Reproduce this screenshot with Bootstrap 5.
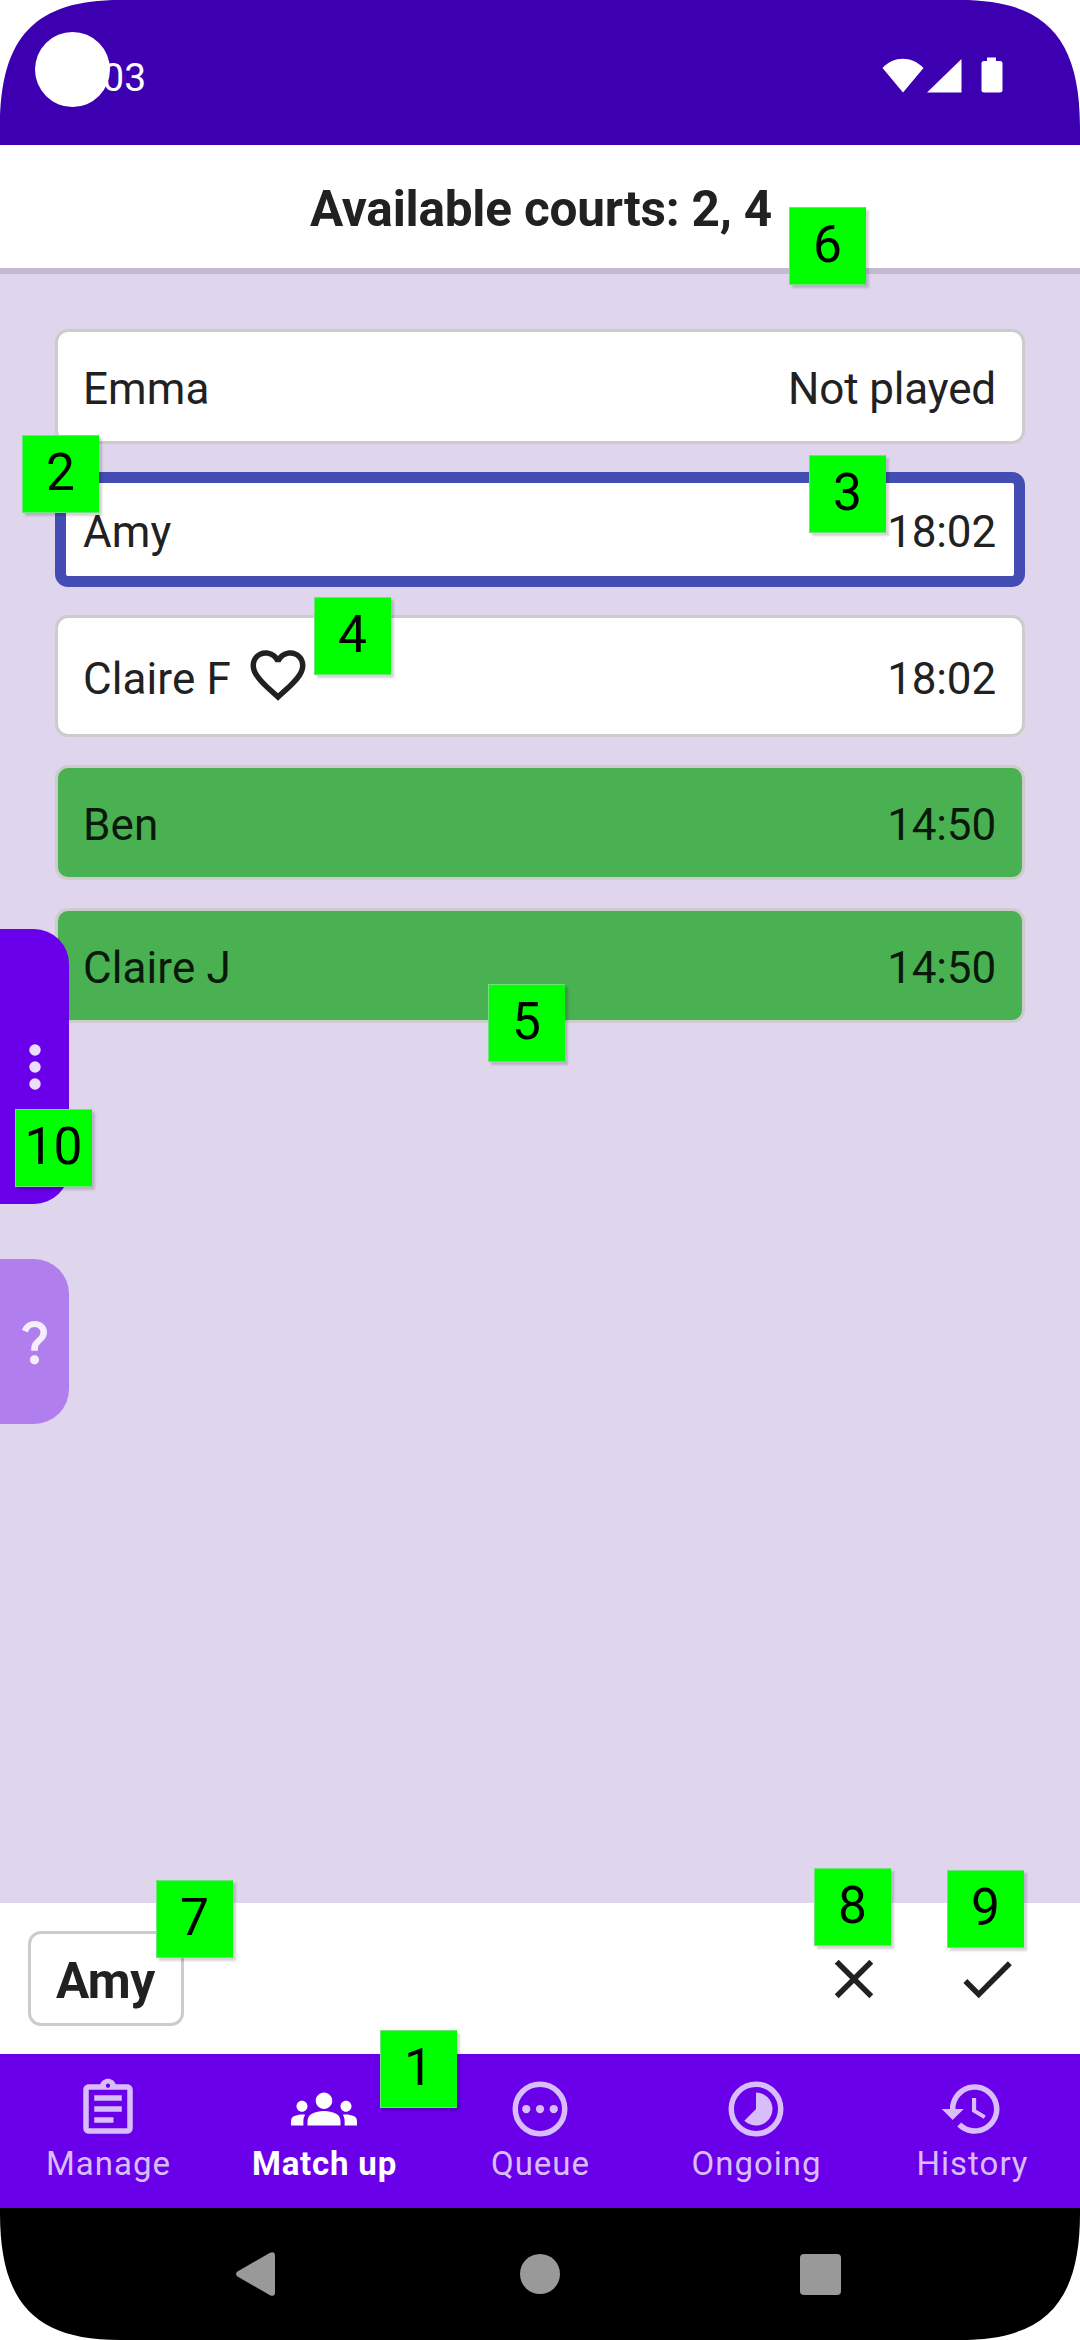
<!DOCTYPE html>
<html lang="en">
<head>
<meta charset="utf-8">
<meta name="viewport" content="width=device-width, initial-scale=1">
<title>Match up</title>
<link rel="stylesheet" href="https://cdn.jsdelivr.net/npm/bootstrap@5.3.0/dist/css/bootstrap.min.css">
<style>
  body { font-family: Roboto, sans-serif; color: #212121; background: #fff; }
  svg { display: block; fill: currentColor; flex: none; }
  .screen { width: 1080px; height: 2340px; background: #dfd6ee; }
  .status-bar { height: 145px; background: #3d00b0; color: #fff; padding: 5px 77px 0 49px; }
  .clock { font-size: 39px; line-height: 1; padding-top: 6px; }
  .camera { left: 35px; top: 32px; width: 75px; height: 75px; }
  .title-bar { height: 129px; background: #fff; border-bottom: 6px solid #c4bbd3; font-size: 49.5px; letter-spacing: -.2px; padding: 6px 0 0 2px; }
  .players { padding: 55px 55px 0; gap: 28px; }
  .player { min-height: 115px; border: 3px solid #ccc; border-radius: 13px; background: #fff; padding: 5px 26px 0 25px; font-size: 44px; line-height: 59px; letter-spacing: -.15px; }
  .player > span:first-child { letter-spacing: .1px; }
  .player.fav { min-height: 122px; padding-top: 6px; }
  .player.fav svg { margin: -8px 0 0 14px; }
  .player.selected { border: 11px solid #434db3; padding: 5px 18px 0 17px; }
  .player.resting { background: #49b152; border-color: #ccc; color: #091a0b; }
  .selection { height: 151px; background: #fff; padding: 0 60px 0 28px; box-shadow: inset 0 -5px 5px -4px #0000000c; }
  .chip { width: 156px; height: 95px; border: 3px solid #ccc; border-radius: 13px; padding: 5px 0 0 25px; font-size: 49.5px; letter-spacing: -.6px; }
  .actions { gap: 67px; }
  .tab-bar { height: 154px; background: #6a00ea; padding-top: 22px; }
  .tab-item { color: #d9bdfa; font-size: 33px; line-height: 39px; letter-spacing: 1px; gap: 2px; }
  .tab-item span { padding-left: 1px; }
  .tab-item.current { color: #fff; letter-spacing: .8px; }
  .system-bar { height: 132px; background: #000; color: #999; padding: 0 239px 0 236px; }
  .home-key { margin-left: 5px; }
  .drawer { left: 0; width: 69px; border-radius: 0 35px 35px 0; }
  .drawer-menu { top: 929px; height: 275px; background: #6a00ea; color: #ecdcfd; }
  .drawer-help { top: 1259px; height: 165px; background: #b07eed; color: #f5edfd; }
  .tag { width: 77px; height: 78px; background: #0f0; color: #000; font-size: 51.5px; line-height: 74px; text-align: center; box-shadow: 3px 3px 2px #0000002b; border: 1px solid #6fe37a; border-right-color: #0f0; }
  .t1 { left: 380px; top: 2030px; } .t2 { left: 22px; top: 435px; }
  .t3 { left: 809px; top: 455px; } .t4 { left: 314px; top: 597px; }
  .t5 { left: 488px; top: 984px; } .t6 { left: 789px; top: 207px; }
  .t7 { left: 156px; top: 1880px; } .t8 { left: 814px; top: 1868px; }
  .t9 { left: 947px; top: 1870px; } .t10 { left: 15px; top: 1109px; }
</style>
<script src="https://cdn.jsdelivr.net/npm/bootstrap@5.3.0/dist/js/bootstrap.bundle.min.js"></script>
</head>
<body>
<div class="screen position-relative overflow-hidden d-flex flex-column">
  <header class="status-bar d-flex align-items-center justify-content-between">
    <span class="clock">18:03</span>
    <svg width="121" height="36" viewBox="0 0 121 36"><path d="M.5 11C12-1.300 29.500-1.300 41.500 11L21 35.500zM45 35.500L79.500 2V35.500zM105 .500h9v3.500h4q2.500 0 2.500 2.500v27q0 2-2.500 2h-16q-2.500 0-2.500-2v-27q0-2.500 2.500-2.500h3z"/></svg>
  </header>
  <div class="title-bar d-flex align-items-center justify-content-center fw-bold">Available courts: 2, 4</div>

  <main class="players d-flex flex-column flex-grow-1">
    <div class="player d-flex align-items-center justify-content-between"><span>Emma</span><span>Not played</span></div>
    <div class="player selected d-flex align-items-center justify-content-between"><span>Amy</span><span>18:02</span></div>
    <div class="player fav d-flex align-items-center justify-content-between">
      <span class="d-flex align-items-center">Claire F
        <svg width="66" height="66" viewBox="0 0 24 24"><path d="M16.500 3c-1.740 0-3.410.81-4.500 2.090C10.910 3.810 9.240 3 7.500 3 4.420 3 2 5.420 2 8.500c0 3.780 3.400 6.860 8.550 11.540L12 21.350l1.450-1.320C18.600 15.360 22 12.280 22 8.500 22 5.420 19.580 3 16.500 3zm-4.400 15.550l-.1.100-.1-.1C7.140 14.240 4 11.390 4 8.500 4 6.500 5.500 5 7.500 5c1.540 0 3.040.99 3.570 2.360h1.870C13.460 5.990 14.960 5 16.500 5c2 0 3.500 1.500 3.500 3.500 0 2.890-3.140 5.740-7.900 10.050z"/></svg>
      </span><span>18:02</span>
    </div>
    <div class="player resting d-flex align-items-center justify-content-between"><span>Ben</span><span>14:50</span></div>
    <div class="player resting d-flex align-items-center justify-content-between"><span>Claire J</span><span>14:50</span></div>
  </main>

  <section class="selection d-flex align-items-center justify-content-between">
    <span class="chip d-flex align-items-center fw-bold">Amy</span>
    <span class="actions d-flex">
      <svg width="66" height="66" viewBox="0 0 24 24"><path d="M19 6.410L17.590 5 12 10.590 6.410 5 5 6.410 10.590 12 5 17.590 6.410 19 12 13.410 17.590 19 19 17.590 13.410 12z"/></svg>
      <svg width="66" height="66" viewBox="0 0 24 24"><path d="M9 16.170L4.830 12l-1.420 1.410L9 19 21 7l-1.410-1.410z"/></svg>
    </span>
  </section>

  <nav class="tab-bar row g-0 align-items-start">
    <a class="tab-item col d-flex flex-column align-items-center text-decoration-none"><svg width="66" height="66" viewBox="0 0 24 24"><path fill-rule="evenodd" d="M7 15h7v2H7zm0-4h10v2H7zm0-4h10v2H7zM19 3h-4.180C14.400 1.840 13.300 1 12 1s-2.400.84-2.820 2H5c-1.100 0-2 .9-2 2v14c0 1.100.9 2 2 2h14c1.100 0 2-.9 2-2V5c0-1.100-.9-2-2-2zm-7-.25c.41 0 .75.34.75.75s-.34.750-.75.750-.75-.34-.75-.75.34-.75.75-.75zM19 19H5V5h14z"/></svg><span>Manage</span></a>
    <a class="tab-item current fw-bold col d-flex flex-column align-items-center text-decoration-none"><svg width="66" height="66" viewBox="0 0 24 24"><path d="M12 12.750c1.630 0 3.070.39 4.240.9 1.080.48 1.760 1.560 1.760 2.730V18H6v-1.610c0-1.180.68-2.260 1.760-2.730 1.170-.52 2.610-.91 4.240-.91zM4 13c1.100 0 2-.9 2-2s-.9-2-2-2-2 .9-2 2 .9 2 2 2zm1.130 1.100C4.760 14.040 4.390 14 4 14c-.99 0-1.930.21-2.780.58C.48 14.900 0 15.620 0 16.430V18h4.500v-1.610c0-.83.23-1.610.63-2.290zM20 13c1.100 0 2-.9 2-2s-.9-2-2-2-2 .9-2 2 .9 2 2 2zm4 3.430c0-.81-.48-1.530-1.220-1.850C21.930 14.210 20.990 14 20 14c-.39 0-.76.04-1.130.1.4.68.63 1.460.63 2.290V18H24v-1.570zM12 6c1.660 0 3 1.340 3 3s-1.340 3-3 3-3-1.340-3-3 1.340-3 3-3z"/></svg><span>Match up</span></a>
    <a class="tab-item col d-flex flex-column align-items-center text-decoration-none"><svg width="66" height="66" viewBox="0 0 24 24"><circle cx="12" cy="12" r="9" fill="none" stroke="currentColor" stroke-width="2"/><circle cx="7" cy="12" r="1.500"/><circle cx="12" cy="12" r="1.500"/><circle cx="17" cy="12" r="1.500"/></svg><span>Queue</span></a>
    <a class="tab-item col d-flex flex-column align-items-center text-decoration-none"><svg width="66" height="66" viewBox="0 0 24 24"><circle cx="12" cy="12" r="9" fill="none" stroke="currentColor" stroke-width="2"/><path d="M12 6a6 6 0 1 1-4.240 10.240L12 12z"/></svg><span>Ongoing</span></a>
    <a class="tab-item col d-flex flex-column align-items-center text-decoration-none"><svg width="66" height="66" viewBox="0 0 24 24"><path d="M13 3c-4.970 0-9 4.030-9 9H1l3.890 3.890.07.14L9 12H6c0-3.870 3.130-7 7-7s7 3.130 7 7-3.130 7-7 7c-1.930 0-3.680-.79-4.940-2.060l-1.420 1.420C8.270 19.990 10.510 21 13 21c4.970 0 9-4.030 9-9s-4.030-9-9-9zm-1 5v5l4.280 2.540.72-1.210-3.500-2.080V8z"/></svg><span>History</span></a>
  </nav>
  <footer class="system-bar d-flex align-items-center justify-content-between">
    <svg width="39" height="44" viewBox="0 0 39 44"><path d="M1.500 19.500L34 .8q5-2 5 3v36.400q0 5-5 3L1.500 24.500q-3-2.500 0-5z"/></svg>
    <svg class="home-key" width="40" height="40" viewBox="0 0 40 40"><circle cx="20" cy="20" r="20"/></svg>
    <svg width="41" height="41" viewBox="0 0 41 41"><rect width="41" height="41" rx="4"/></svg>
  </footer>

  <div class="camera position-absolute bg-white rounded-circle"></div>
  <div class="drawer drawer-menu position-absolute d-flex align-items-center justify-content-center"><svg width="66" height="66" viewBox="0 0 24 24"><circle cx="12" cy="5.800" r="2.080"/><circle cx="12" cy="12" r="2.080"/><circle cx="12" cy="18.200" r="2.080"/></svg></div>
  <div class="drawer drawer-help position-absolute d-flex align-items-center justify-content-center"><svg width="55" height="55" viewBox="0 0 24 24"><path d="M11.070 12.850c.77-1.390 2.250-2.210 3.110-3.440.91-1.290.4-3.700-2.180-3.700-1.690 0-2.520 1.280-2.870 2.340L6.540 6.960C7.250 4.830 9.180 3 11.990 3c2.350 0 3.960 1.070 4.780 2.410.7 1.150 1.110 3.300.03 4.900-1.200 1.770-2.350 2.310-2.970 3.450-.25.46-.35.76-.35 2.240h-2.890c-.01-.78-.13-2.050.48-3.150zM14 20c0 1.100-.9 2-2 2s-2-.9-2-2 .9-2 2-2 2 .9 2 2z"/></svg></div>

  <span class="tag t1 position-absolute">1</span>
  <span class="tag t2 position-absolute">2</span>
  <span class="tag t3 position-absolute">3</span>
  <span class="tag t4 position-absolute">4</span>
  <span class="tag t5 position-absolute">5</span>
  <span class="tag t6 position-absolute">6</span>
  <span class="tag t7 position-absolute">7</span>
  <span class="tag t8 position-absolute">8</span>
  <span class="tag t9 position-absolute">9</span>
  <span class="tag t10 position-absolute">10</span>

  <!-- rounded display corners -->
  <svg class="position-absolute top-0 start-0 text-white" width="1080" height="2340" viewBox="0 0 1080 2340"><path d="M0 0V127C0 36 36 0 120 0zM1080 0V127C1080 36 1044 0 960 0zM0 2340V2213C0 2304 36 2340 120 2340zM1080 2340V2213C1080 2304 1044 2340 960 2340z"/></svg>
</div>
</body>
</html>
